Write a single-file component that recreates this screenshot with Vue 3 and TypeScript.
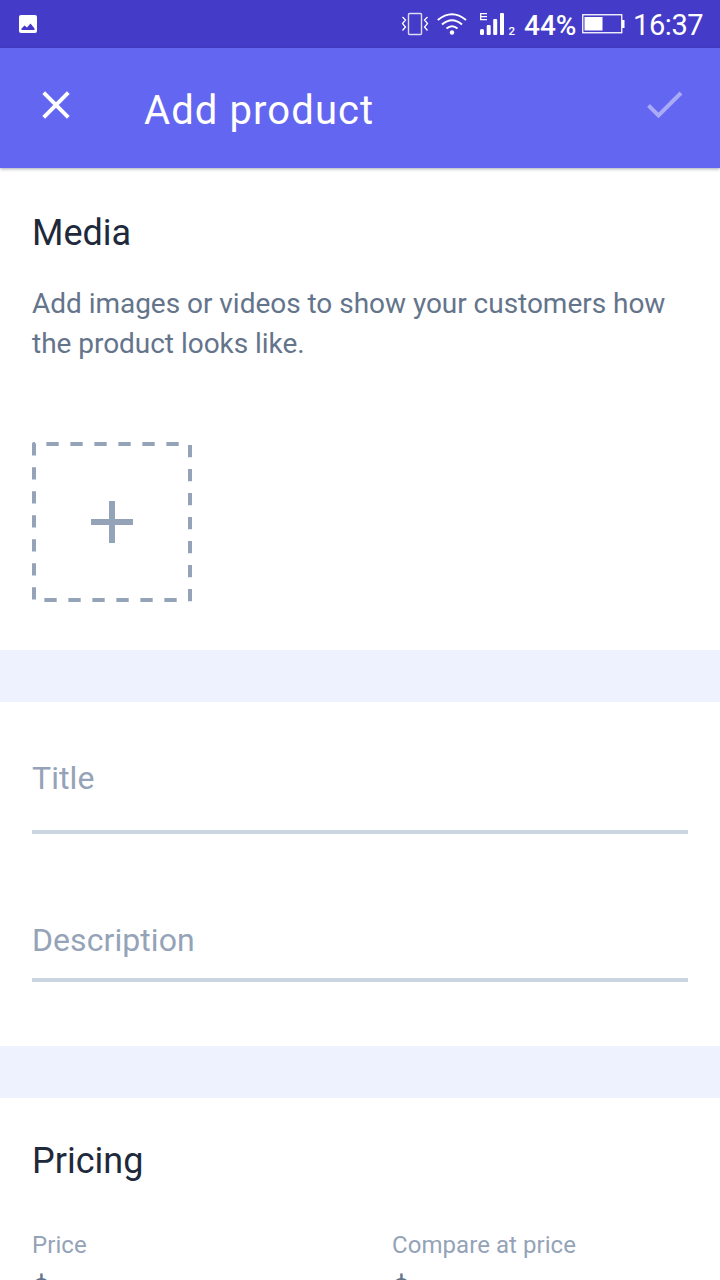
<script setup lang="ts">
interface Field {
  label: string
  kind: string
}

const details: Field[] = [
  { label: 'Title', kind: 'title' },
  { label: 'Description', kind: 'description' },
]
const prices: string[] = ['Price', 'Compare at price']
</script>

<template>
  <div class="screen">
    <div class="status">
      <svg class="picture" width="18" height="18" viewBox="0 0 18 18">
        <rect width="18" height="18" rx="2" fill="#fff" />
        <path d="M2.500 15v-1.500l3-3 2.500 2L11.500 8.500l4 5V15z" fill="#4338ca" />
      </svg>
      <svg class="signals" width="126" height="48" viewBox="0 0 126 48">
        <g fill="none" stroke="#fff">
          <rect x="18.500" y="13.500" width="13" height="21" rx="1" stroke-width="1.400" stroke="#dcdcf8" />
          <path d="M12.500 17l3 3-3 3.500 3 3.500-3 3.500M37.500 17l-3 3 3 3.500-3 3.500 3 3.500" stroke-width="1.300" />
          <path d="M47.800 20Q62 8.500 76 20M52 24.600Q62 16 72 24.600M56.500 28.600Q62 24 67.500 28.600" stroke-width="2" />
          <path d="M97 13.700h-6.300v6H97M90.700 16.700H97" stroke-width="1.300" />
        </g>
        <g fill="#fff">
          <circle cx="62" cy="32.500" r="2.200" />
          <rect x="90" y="29" width="4" height="6" rx="1.500" />
          <rect x="96.700" y="25" width="4" height="10" rx="1" />
          <rect x="103.200" y="19" width="4" height="16" rx="1" />
          <rect x="110" y="13" width="4" height="22" rx="1" />
        </g>
        <text x="118.500" y="35" fill="#fff" font-size="11.500" font-weight="500">2</text>
      </svg>
      <span class="percent">44%</span>
      <svg class="battery" width="43" height="20" viewBox="0 0 43 20">
        <rect x=".75" y=".75" width="39" height="18" fill="none" stroke="#fff" stroke-width="1.300" />
        <rect x="2.500" y="3" width="18" height="13.500" fill="#fff" />
        <rect x="40" y="6" width="2.500" height="8" fill="#fff" />
      </svg>
      <span class="clock">16:37</span>
    </div>

    <header class="bar">
      <svg class="close" width="28" height="28" viewBox="0 0 28 28">
        <path d="M1.700 1.700l24.600 24.600M26.300 1.700L1.700 26.300" stroke="#fff" stroke-width="3.900" />
      </svg>
      <h1>Add product</h1>
      <svg class="check" width="36" height="28" viewBox="0 0 36 28">
        <path d="M1.500 14.500L11.500 24.500L34 2" fill="none" stroke="#a9abf7" stroke-width="4" />
      </svg>
    </header>

    <section class="media">
      <h2>Media</h2>
      <p>Add images or videos to show your customers how<br />the product looks like.</p>
      <svg class="add" width="160" height="160" viewBox="0 0 160 160">
        <g stroke="#94a3b8" stroke-width="4" stroke-dasharray="12.300 11.700">
          <path d="M14.400 2H147.500" />
          <path d="M158 3V160" />
          <path d="M12.400 158H145" />
          <path d="M2 1.300V158" />
        </g>
        <path d="M0 2q0-2 2-2h1v2z" fill="#94a3b8" />
        <path d="M59 80h42M80 59v42" stroke="#94a3b8" stroke-width="6" />
      </svg>
    </section>

    <section class="details">
      <div v-for="field in details" :key="field.label" class="field" :class="field.kind">{{ field.label }}</div>
    </section>

    <section class="pricing">
      <h2>Pricing</h2>
      <div class="prices">
        <div v-for="label in prices" :key="label">
          <div class="label">{{ label }}</div>
          <div class="amount">$</div>
        </div>
      </div>
    </section>
  </div>
</template>

<style>
body {
  margin: 0;
  overflow: hidden;
}
</style>

<style scoped>
.screen {
  width: 720px;
  height: 1280px;
  overflow: hidden;
  background: #fff;
  font-family: Roboto, sans-serif;
  color: #1e293b;
}
.screen * {
  box-sizing: border-box;
}
svg {
  display: block;
  flex: none;
}
.status {
  height: 48px;
  display: flex;
  align-items: center;
  background: #453bc9;
  color: #fff;
}
.picture {
  margin-left: 19px;
}
.signals {
  margin-left: 353px;
}
.percent {
  width: 55px;
  margin-left: 8px;
  font-size: 28px;
  font-weight: 500;
  line-height: 48px;
  padding-top: 3px;
}
.battery {
  margin-left: 3px;
}
.clock {
  margin-left: 8px;
  font-size: 29px;
  line-height: 48px;
  letter-spacing: -0.4px;
  padding-top: 2px;
}
.bar {
  position: relative;
  height: 120px;
  display: flex;
  align-items: flex-start;
  background: #6366f1;
  color: #fff;
  box-shadow: 0 1px 3px rgba(30, 41, 59, 0.4);
}
.close {
  margin: 43px 0 0 42px;
}
h1 {
  margin: 39px 0 0 74px;
  font-size: 40px;
  font-weight: 400;
  line-height: 48px;
  letter-spacing: 1.1px;
}
.check {
  margin: 43px 37px 0 auto;
}
h2 {
  margin: 0;
  font-size: 36px;
  font-weight: 400;
  line-height: 48px;
}
.media {
  height: 482px;
  padding: 41px 32px 0;
}
.media p {
  margin: 27px 0 0;
  height: 158px;
  font-size: 28px;
  line-height: 40px;
  letter-spacing: -0.03px;
  color: #64748b;
  white-space: nowrap;
}
.details {
  height: 448px;
  padding: 0 32px;
  border-top: 52px solid #eef2ff;
  border-bottom: 52px solid #eef2ff;
}
.field {
  border-bottom: 4px solid #cbd5e1;
  color: #94a3b8;
  font-size: 32px;
  line-height: 40px;
  letter-spacing: 0.07px;
}
.title {
  height: 132px;
  padding-top: 56px;
}
.description {
  height: 148px;
  padding-top: 86px;
}
.pricing {
  padding: 39px 32px 0;
}
.prices {
  display: grid;
  grid-template-columns: 1fr 1fr;
  column-gap: 64px;
  margin-top: 44px;
}
.label {
  font-size: 24px;
  line-height: 32px;
  letter-spacing: 0.06px;
  color: #94a3b8;
}
.amount {
  margin-top: 8px;
  font-size: 32px;
  line-height: 40px;
  color: #64748b;
}
</style>
